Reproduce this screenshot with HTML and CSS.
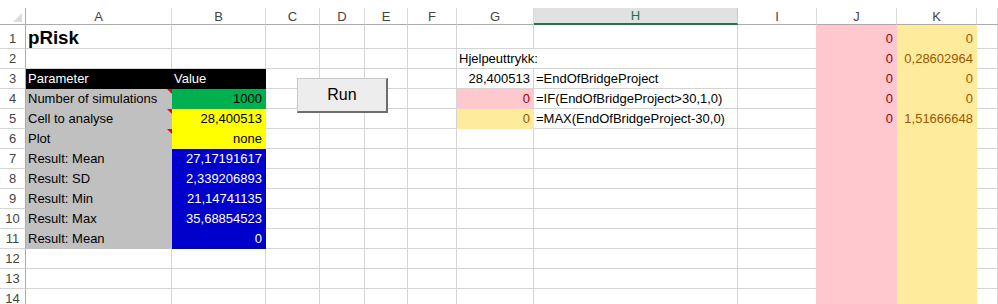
FILE: index.html
```html
<!DOCTYPE html>
<html lang="nb">
<head>
    <meta charset="UTF-8">
    <meta name="viewport" content="width=device-width, initial-scale=1.0">
    <title>pRisk</title>
    <link rel="stylesheet" href="styles.css">
</head>
<body>
    <div class="sheet">
        <table class="grid">
            <colgroup>
                <col class="w-hdr">
                <col class="w-a">
                <col class="w-b">
                <col class="w-c">
                <col class="w-d">
                <col class="w-e">
                <col class="w-f">
                <col class="w-g">
                <col class="w-h">
                <col class="w-i">
                <col class="w-j">
                <col class="w-k">
                <col class="w-l">
            </colgroup>
            <thead>
                <tr class="col-heads">
                    <th class="corner">
                        <svg width="9" height="9" viewBox="0 0 9 9"><polygon points="9,0 9,9 0,9" fill="#dcdcdc"/></svg>
                    </th>
                    <th>A</th><th>B</th><th>C</th><th>D</th><th>E</th><th>F</th><th>G</th>
                    <th class="sel">H</th><th>I</th><th>J</th><th>K</th><th></th>
                </tr>
            </thead>
            <tbody>
                <tr class="tall">
                    <th>1</th>
                    <td class="title">pRisk</td><td></td><td></td><td></td><td></td><td></td><td></td><td></td>
                    <td class="pre-bad"></td><td class="bad num">0</td><td class="neutral num">0</td><td></td>
                </tr>
                <tr>
                    <th>2</th>
                    <td></td><td></td><td></td><td></td><td></td><td></td>
                    <td colspan="2">Hjelpeuttrykk:</td>
                    <td class="pre-bad"></td><td class="bad num">0</td><td class="neutral num">0,28602964</td><td></td>
                </tr>
                <tr>
                    <th>3</th>
                    <td class="head-cell">Parameter</td><td class="head-cell">Value</td>
                    <td></td><td></td><td></td><td></td>
                    <td class="num">28,400513</td><td>=EndOfBridgeProject</td>
                    <td class="pre-bad"></td><td class="bad num">0</td><td class="neutral num">0</td><td></td>
                </tr>
                <tr>
                    <th>4</th>
                    <td class="label note">Number of simulations</td><td class="input-ok num">1000</td>
                    <td></td><td></td><td></td><td class="pre-fill"></td>
                    <td class="bad num">0</td><td>=IF(EndOfBridgeProject&gt;30,1,0)</td>
                    <td class="pre-bad"></td><td class="bad num">0</td><td class="neutral num">0</td><td></td>
                </tr>
                <tr>
                    <th>5</th>
                    <td class="label note">Cell to analyse</td><td class="input num">28,400513</td>
                    <td></td><td></td><td></td><td class="pre-fill"></td>
                    <td class="neutral num">0</td><td>=MAX(EndOfBridgeProject-30,0)</td>
                    <td class="pre-bad"></td><td class="bad num">0</td><td class="neutral num">1,51666648</td><td></td>
                </tr>
                <tr>
                    <th>6</th>
                    <td class="label note">Plot</td><td class="input num">none</td>
                    <td></td><td></td><td></td><td></td><td></td><td></td>
                    <td class="pre-bad"></td><td class="bad"></td><td class="neutral"></td><td></td>
                </tr>
                <tr>
                    <th>7</th>
                    <td class="label">Result: Mean</td><td class="result num">27,17191617</td>
                    <td></td><td></td><td></td><td></td><td></td><td></td>
                    <td class="pre-bad"></td><td class="bad"></td><td class="neutral"></td><td></td>
                </tr>
                <tr>
                    <th>8</th>
                    <td class="label">Result: SD</td><td class="result num">2,339206893</td>
                    <td></td><td></td><td></td><td></td><td></td><td></td>
                    <td class="pre-bad"></td><td class="bad"></td><td class="neutral"></td><td></td>
                </tr>
                <tr>
                    <th>9</th>
                    <td class="label">Result: Min</td><td class="result num">21,14741135</td>
                    <td></td><td></td><td></td><td></td><td></td><td></td>
                    <td class="pre-bad"></td><td class="bad"></td><td class="neutral"></td><td></td>
                </tr>
                <tr>
                    <th>10</th>
                    <td class="label">Result: Max</td><td class="result num">35,68854523</td>
                    <td></td><td></td><td></td><td></td><td></td><td></td>
                    <td class="pre-bad"></td><td class="bad"></td><td class="neutral"></td><td></td>
                </tr>
                <tr>
                    <th>11</th>
                    <td class="label">Result: Mean</td><td class="result num">0</td>
                    <td></td><td></td><td></td><td></td><td></td><td></td>
                    <td class="pre-bad"></td><td class="bad"></td><td class="neutral"></td><td></td>
                </tr>
                <tr>
                    <th>12</th>
                    <td></td><td></td><td></td><td></td><td></td><td></td><td></td><td></td>
                    <td class="pre-bad"></td><td class="bad"></td><td class="neutral"></td><td></td>
                </tr>
                <tr>
                    <th>13</th>
                    <td></td><td></td><td></td><td></td><td></td><td></td><td></td><td></td>
                    <td class="pre-bad"></td><td class="bad"></td><td class="neutral"></td><td></td>
                </tr>
                <tr>
                    <th>14</th>
                    <td></td><td></td><td></td><td></td><td></td><td></td><td></td><td></td>
                    <td class="pre-bad"></td><td class="bad"></td><td class="neutral"></td><td></td>
                </tr>
            </tbody>
        </table>

        <button class="run-btn">Run</button>
    </div>
</body>
</html>
```

FILE: styles.css
```css
html, body {
    margin: 0;
    overflow: hidden;
    background: #fff;
}
body {
    font-family: "Liberation Sans", Arial, sans-serif;
    font-size: 13px;
    color: #000;
    padding-top: 8px;
}
.sheet {
    position: relative;
    width: 998px;
}
.grid {
    border-collapse: separate;
    border-spacing: 0;
    table-layout: fixed;
    width: 998px;
}
.w-hdr { width: 26px; }
.w-a { width: 146px; }
.w-b { width: 94px; }
.w-c { width: 54px; }
.w-d { width: 45px; }
.w-e { width: 43px; }
.w-f { width: 49px; }
.w-g { width: 77px; }
.w-h { width: 204px; }
.w-i { width: 79px; }
.w-j { width: 80px; }
.w-k { width: 80px; }
.w-l { width: 21px; }

.grid td,
.grid th {
    box-sizing: border-box;
    padding: 0 3px 1px 2px;
    border-right: 1px solid #d4d4d4;
    border-bottom: 1px solid #d4d4d4;
    white-space: nowrap;
    overflow: visible;
    line-height: 16px;
    vertical-align: bottom;
    text-align: left;
    font-weight: normal;
}
.grid tr {
    height: 20px;
}
.grid tr.tall {
    height: 24px;
}

/* headers */
.col-heads {
    height: 17px !important;
}
.col-heads th {
    text-align: center;
    color: #444;
    padding: 0;
    vertical-align: middle;
    line-height: 15px;
    border-bottom-color: #ababab;
    border-right-color: #dadada;
}
.col-heads th.corner {
    border-right-color: #ababab;
    text-align: right;
    padding: 3px 3px 0 0;
    line-height: 0;
}
.col-heads th.sel {
    background: #e1e1e1;
    color: #217346;
    border-bottom: 2px solid #217346;
    border-right-color: #c6c6c6;
}
tbody th {
    text-align: center !important;
    color: #444;
    padding: 0 0 1px 0 !important;
    border-right-color: #ababab !important;
}

/* cell content */
.num {
    text-align: right !important;
}
.grid td.title {
    font-size: 18.7px;
    font-weight: bold;
    line-height: 20px;
    padding-bottom: 0;
}
.head-cell {
    background: #000;
    color: #fff;
    border-color: #000 !important;
}
.label {
    background: #c0c0c0;
    border-color: #c0c0c0 !important;
}
.note {
    position: relative;
}
.note::after {
    content: "";
    position: absolute;
    top: 0;
    right: -1px;
    border-top: 5px solid #ff0000;
    border-left: 5px solid transparent;
}
.input-ok {
    background: #00b050;
    border-color: #00b050 !important;
}
.input {
    background: #ffff00;
    border-color: #ffff00 !important;
}
.result {
    background: #0000cc;
    color: #fff;
    border-color: #0000cc !important;
}
.bad {
    background: #ffc7ce;
    color: #9c0006;
    border-color: #ffc7ce !important;
}
.neutral {
    background: #ffeb9c;
    color: #9c5700;
    border-color: #ffeb9c !important;
}
.pre-bad {
    border-right-color: #ffc7ce !important;
}

/* form button lying over the sheet */
.run-btn {
    position: absolute;
    left: 297px;
    top: 70px;
    width: 91px;
    height: 35px;
    box-sizing: border-box;
    background: #ededed;
    border: 1px solid #c8c8c8;
    border-right: 2px solid #6d6d6d;
    border-bottom: 2px solid #6d6d6d;
    font-family: "Liberation Sans", Arial, sans-serif;
    font-size: 16px;
    color: #000;
    padding: 0;
}
```
